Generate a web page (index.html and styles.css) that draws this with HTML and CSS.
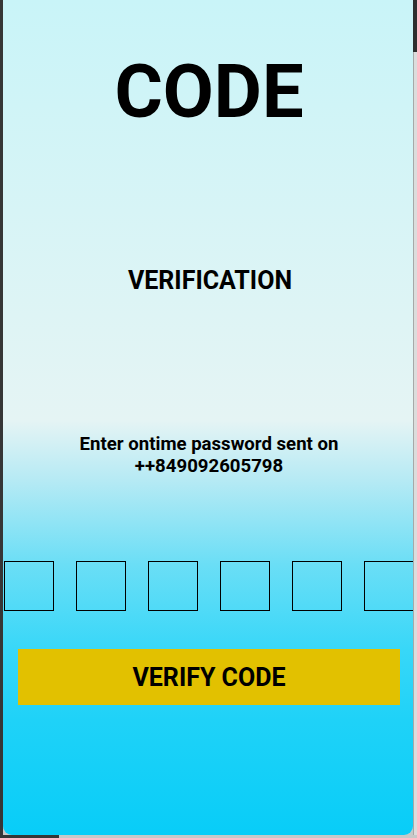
FILE: index.html
```html
<!DOCTYPE html>
<html>
<head>
<meta charset="utf-8">
<link rel="stylesheet" href="styles.css">
</head>
<body>
<div class="screen">
  <div class="left-edge"></div>
  <main class="panel">
    <h1 class="title">CODE</h1>
    <h2 class="subtitle">VERIFICATION</h2>
    <p class="info">Enter ontime password sent on<br>++849092605798</p>
    <div class="otp">
      <div class="otp-box"></div>
      <div class="otp-box"></div>
      <div class="otp-box"></div>
      <div class="otp-box"></div>
      <div class="otp-box"></div>
      <div class="otp-box"></div>
    </div>
    <button class="verify">VERIFY CODE</button>
  </main>
  <div class="right-edge">
    <div class="right-top"></div>
    <div class="right-rest"></div>
  </div>
</div>
<div class="bottom-edge">
  <div class="bottom-dark"></div>
  <div class="bottom-light"></div>
</div>
</body>
</html>
```
FILE: styles.css
```css
html, body {
  margin: 0;
  padding: 0;
  overflow: hidden;
  background: #c8c8c8;
}
body {
  width: 417px;
  height: 838px;
  font-family: Roboto, "Liberation Sans", sans-serif;
}
.screen {
  display: flex;
  height: 835px;
}
.left-edge {
  width: 3px;
  flex: none;
  background: #363636;
}
.right-edge {
  width: 4px;
  flex: none;
  display: flex;
  flex-direction: column;
}
.right-top {
  height: 52px;
  background: #2e2e2e;
}
.right-rest {
  flex: 1;
  background: #dcdcdc;
  border-left: 1px solid #a8a8a8;
}
.bottom-edge {
  display: flex;
  height: 3px;
}
.bottom-dark {
  width: 59px;
  background: #363636;
}
.bottom-light {
  flex: 1;
  background: #c8c8c8;
}
.panel {
  width: 410px;
  flex: none;
  overflow: hidden;
  border-radius: 0 0 9px 9px;
  background: linear-gradient(to bottom,
    #c9f4f8 0px,
    #e5f4f4 420px,
    #b6eaf4 480px,
    #6adef6 565px,
    #38d7f8 650px,
    #1fd2f8 720px,
    #08cdf8 835px);
  display: flex;
  flex-direction: column;
  align-items: stretch;
  text-align: center;
  color: #000;
}
.title {
  margin: 55px 0 0;
  font-size: 74px;
  line-height: 74px;
  font-weight: 700;
  padding-left: 2px;
}
.subtitle {
  margin: 139px 0 0;
  font-size: 25px;
  line-height: 25px;
  font-weight: 700;
  padding-left: 4px;
}
.info {
  margin: 140px 0 0;
  font-size: 18.6px;
  line-height: 22px;
  font-weight: 700;
  padding-left: 2px;
}
.otp {
  display: flex;
  gap: 22px;
  margin: 84px 0 0 1px;
}
.otp-box {
  flex: none;
  width: 48px;
  height: 48px;
  border: 1px solid #000;
}
.verify {
  margin: 38px 13px 0 15px;
  height: 56px;
  border: none;
  background: #e2c100;
  font-family: Roboto, "Liberation Sans", sans-serif;
  font-size: 25px;
  font-weight: 700;
  color: #000;
  padding: 0;
}
```
